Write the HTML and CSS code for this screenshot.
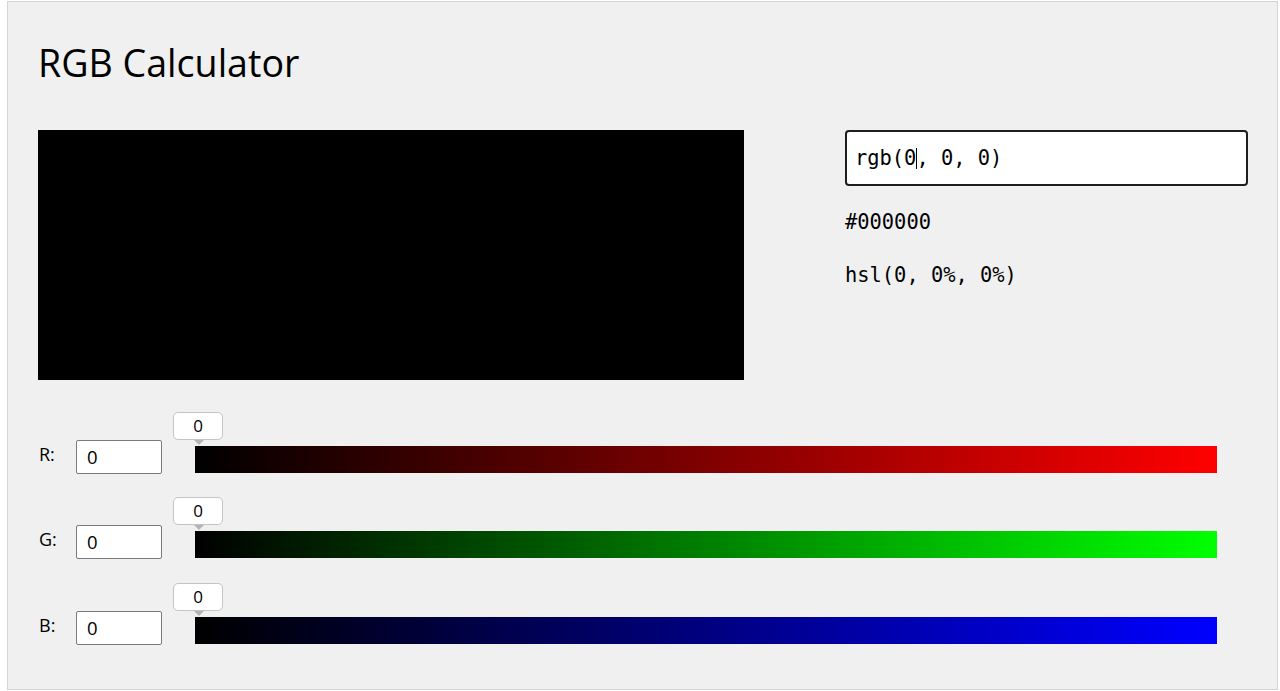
FILE: index.html
```html
<!DOCTYPE html>
<html>
<head>
<meta charset="utf-8">
<title>RGB Calculator</title>
<link rel="stylesheet" href="styles.css">
</head>
<body>
<div class="app">
  <h1 class="title">RGB Calculator</h1>
  <div class="top">
    <div class="preview"></div>
    <div class="values">
      <div class="rgb-field">rgb(0<span class="caret"></span>, 0, 0)</div>
      <div class="value-line hex">#000000</div>
      <div class="value-line hsl">hsl(0, 0%, 0%)</div>
    </div>
  </div>
  <div class="sliders">
    <div class="row">
      <span class="label">R:</span>
      <div class="num">0</div>
      <div class="slider">
        <div class="bubble">0</div>
        <div class="bar bar-r"></div>
      </div>
    </div>
    <div class="row">
      <span class="label">G:</span>
      <div class="num">0</div>
      <div class="slider">
        <div class="bubble">0</div>
        <div class="bar bar-g"></div>
      </div>
    </div>
    <div class="row row-b">
      <span class="label">B:</span>
      <div class="num">0</div>
      <div class="slider">
        <div class="bubble">0</div>
        <div class="bar bar-b"></div>
      </div>
    </div>
  </div>
</div>
</body>
</html>
```

FILE: styles.css
```css
html, body {
  margin: 0;
  background: #ffffff;
}
body {
  font-family: "Open Sans", "Noto Sans", sans-serif;
  color: #000;
}
.app {
  box-sizing: border-box;
  margin: 1px 2px 0 7px;
  height: 689px;
  border: 1px solid #d4d4d4;
  background: #f0f0f0;
  padding: 0 24px 0 30px;
}
.title {
  margin: 0;
  padding-top: 38px;
  font-size: 37.6px;
  font-weight: 400;
  line-height: 46px;
  height: 90px;
  box-sizing: content-box;
}
.top {
  display: flex;
  align-items: flex-start;
}
.preview {
  flex: none;
  width: 706px;
  height: 250px;
  background: #000;
}
.values {
  flex: none;
  margin-left: 101px;
  width: 403px;
  font-family: "DejaVu Sans Mono", monospace;
  font-size: 20.4px;
}
.rgb-field {
  box-sizing: border-box;
  height: 56px;
  border: 2px solid #1e1e1e;
  border-radius: 4px;
  background: #fff;
  padding-left: 8px;
  line-height: 52px;
}
.caret {
  display: inline-block;
  width: 1px;
  height: 21px;
  background: #000;
  vertical-align: -4px;
  margin-right: -1px;
}
.value-line {
  line-height: 26px;
}
.hex {
  margin-top: 23px;
}
.hsl {
  margin-top: 27px;
}
.sliders {
  margin-top: 32px;
  display: flex;
  flex-direction: column;
  gap: 23px;
}
.row-b {
  margin-top: 1px;
}
.row {
  display: flex;
  align-items: flex-start;
  height: 62px;
}
.label {
  flex: none;
  width: 37px;
  padding-top: 30px;
  font-size: 18px;
  line-height: 24px;
  margin-left: 1px;
}
.num {
  flex: none;
  box-sizing: border-box;
  margin-top: 28px;
  width: 86px;
  height: 34px;
  border: 1px solid #7a7a7a;
  border-radius: 2px;
  background: #fff;
  padding-left: 10px;
  font-size: 18.5px;
  line-height: 32px;
}
.slider {
  flex: none;
  position: relative;
  margin-left: 33px;
  width: 1022px;
  padding-top: 34px;
}
.bar {
  height: 27px;
}
.bar-r { background: linear-gradient(to right, #000, #ff0000); }
.bar-g { background: linear-gradient(to right, #000, #00ff00); }
.bar-b { background: linear-gradient(to right, #000, #0000ff); }
.bubble {
  position: absolute;
  left: -22px;
  top: 0;
  box-sizing: border-box;
  width: 50px;
  height: 28px;
  border: 1px solid #c4c4c4;
  border-radius: 5px;
  background: #fff;
  text-align: center;
  font-size: 17px;
  line-height: 26px;
}
.bubble::after {
  content: "";
  position: absolute;
  left: 20px;
  bottom: -6px;
  border-left: 5px solid transparent;
  border-right: 5px solid transparent;
  border-top: 5px solid #b4b4b4;
}
```
